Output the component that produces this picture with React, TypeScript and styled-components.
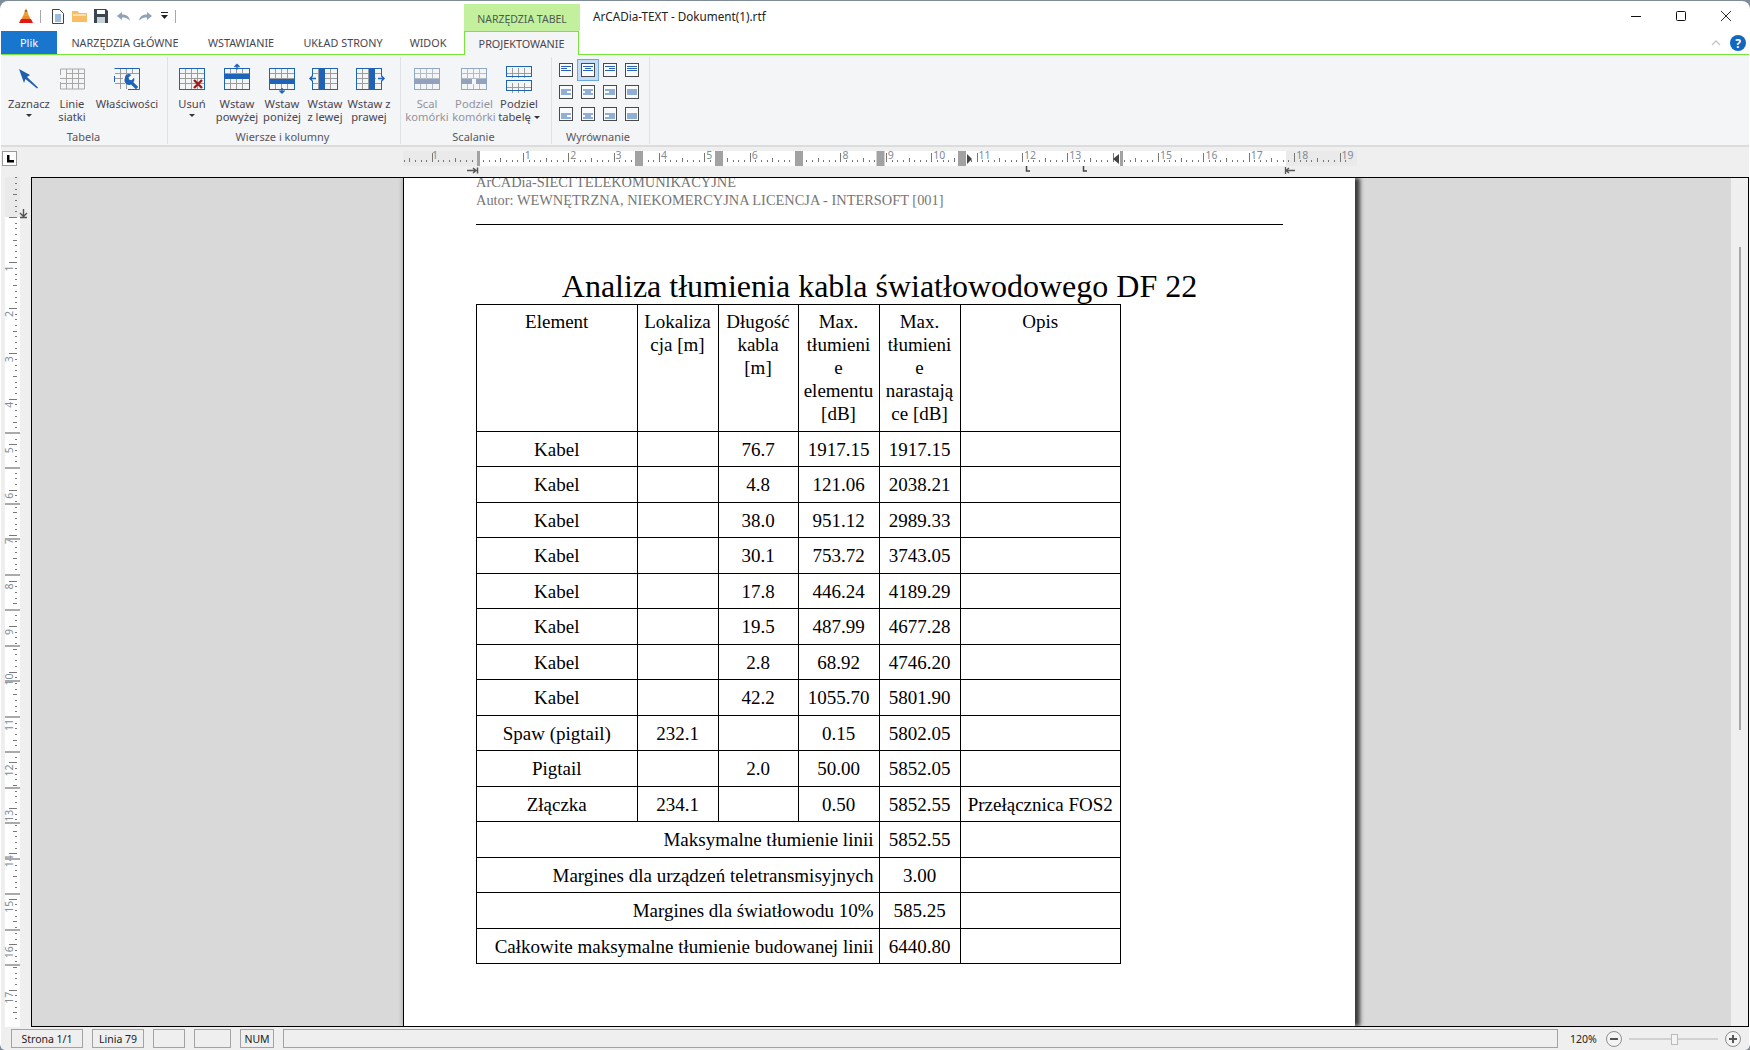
import React from 'react';
import styled, { createGlobalStyle } from 'styled-components';

const GlobalStyle = createGlobalStyle`
  html, body {
    margin: 0;
    padding: 0;
    background: #7d8c98;
    overflow: hidden;
  }
  * {
    box-sizing: border-box;
  }
`;

const uiFont = `"Noto Sans", "Open Sans", sans-serif`;
const docFont = `"Liberation Serif", "Times New Roman", serif`;

const Window = styled.div`
  width: 1750px;
  height: 1049px;
  margin-top: 1px;
  padding: 0 1px;
  display: flex;
  flex-direction: column;
  background: #ffffff;
  border-radius: 8px 8px 6px 6px;
  overflow: hidden;
  font-family: ${uiFont};
  color: #444;
`;

const TitleRow = styled.div`
  height: 30px;
  display: flex;
  align-items: stretch;
  flex: none;
`;

const QuickBar = styled.div`
  width: 463px;
  display: flex;
  align-items: center;
  padding-left: 18px;
`;

const QuickIcon = styled.svg<{ $gap?: number }>`
  flex: none;
  margin-right: ${(p) => p.$gap ?? 7}px;
`;

const QuickSep = styled.div`
  width: 1px;
  height: 13px;
  background: #a8a8a8;
  margin: 0 11px 0 -1px;
`;

const ContextTab = styled.div`
  width: 116px;
  margin-top: 3px;
  background: #c2f09c;
  color: #505a50;
  font-size: 10.5px;
  display: flex;
  align-items: center;
  justify-content: center;
  padding-top: 3px;
`;

const DocTitle = styled.div`
  margin-left: 13px;
  font-size: 11.7px;
  line-height: 30px;
  color: #222;
`;

const WindowControls = styled.div`
  margin-left: auto;
  display: flex;
  align-items: center;
  padding-right: 18px;
  gap: 35px;
`;

const TabsRow = styled.div`
  height: 24px;
  display: flex;
  align-items: stretch;
  flex: none;
  border-bottom: 1px solid #76e63a;
`;

const FileTab = styled.div`
  width: 56px;
  background: #1976cf;
  color: #fff;
  font-size: 11px;
  display: flex;
  align-items: center;
  justify-content: center;
`;

const Tab = styled.div<{ $w: number }>`
  width: ${(p) => p.$w}px;
  font-size: 10.8px;
  color: #4a4550;
  display: flex;
  align-items: center;
  justify-content: center;
`;

const ActiveTab = styled(Tab)`
  margin-left: 5px;
  height: 24px;
  background: #f3f5f7;
  border: 1px solid #76e63a;
  border-bottom: none;
`;

const RibbonEnd = styled.div`
  margin-left: auto;
  display: flex;
  align-items: center;
  padding-right: 3px;
  gap: 9px;
`;

const Ribbon = styled.div`
  height: 92px;
  flex: none;
  display: flex;
  padding: 2px 0 1px;
  background: #f3f5f7;
  border-bottom: 2px solid #dcdcdc;
`;

const Group = styled.div<{ $w: number }>`
  width: ${(p) => p.$w}px;
  display: flex;
  flex-direction: column;
  border-right: 1px solid #dfe2e5;
`;

const GroupBody = styled.div<{ $pad: number }>`
  flex: 1;
  display: flex;
  padding-left: ${(p) => p.$pad}px;
`;

const GroupLabel = styled.div<{ $shift?: number }>`
  height: 15px;
  line-height: 15px;
  padding-right: ${(p) => p.$shift ?? 0}px;
  text-align: center;
  font-size: 11px;
  color: #5a5560;
`;

const RibbonButton = styled.div<{ $w: number; $off?: boolean }>`
  width: ${(p) => p.$w}px;
  padding-top: 11px;
  display: flex;
  flex-direction: column;
  align-items: center;
  text-align: center;
  font-size: 11.2px;
  line-height: 13px;
  white-space: nowrap;
  color: ${(p) => (p.$off ? '#93939b' : '#4a4550')};
`;

const ButtonIcon = styled.svg`
  display: block;
  margin-bottom: 7px;
  overflow: visible;
`;

const DropArrow = styled.span`
  display: block;
  width: 0;
  height: 0;
  margin: 4px auto 0;
  border-left: 3px solid transparent;
  border-right: 3px solid transparent;
  border-top: 3px solid #333;
`;

const InlineArrow = styled(DropArrow)`
  display: inline-block;
  margin: 0 0 2px 3px;
`;

const AlignGrid = styled.div`
  margin-top: 2px;
  display: grid;
  grid-template-columns: repeat(4, 22px);
  grid-auto-rows: 22px;
`;

const AlignCell = styled.div<{ $on?: boolean }>`
  display: flex;
  align-items: center;
  justify-content: center;
  background: ${(p) => (p.$on ? '#c5def7' : 'transparent')};
  border: 1px solid ${(p) => (p.$on ? '#6da6e2' : 'transparent')};
`;

const RulerRow = styled.div`
  height: 30px;
  flex: none;
  display: flex;
  background: #efefef;
  position: relative;
`;

const CornerBox = styled.div`
  width: 15px;
  height: 15px;
  margin: 4px 0 0 1px;
  background: #fff;
  border: 1px solid #999;
  display: flex;
  align-items: center;
  justify-content: center;
`;

const RulerSvg = styled.svg`
  display: block;
  margin-left: 386px;
  font-family: ${uiFont};
`;

const Middle = styled.div`
  flex: 1;
  min-height: 0;
  display: flex;
  background: #efefef;
`;

const SideRuler = styled.svg`
  display: block;
  width: 30px;
  flex: none;
  font-family: ${uiFont};
`;

const Workspace = styled.div`
  flex: 1;
  min-width: 0;
  display: flex;
  border: 1px solid #000;
  overflow: hidden;
`;

const GrayArea = styled.div`
  flex: 1;
  min-width: 0;
  background: #d9d9d9;
  padding-left: 371px;
`;

const Scrollbar = styled.div`
  width: 17px;
  flex: none;
  background: #efefef;
  display: flex;
  justify-content: center;
  padding-top: 69px;
`;

const ScrollThumb = styled.div`
  width: 2px;
  height: 483px;
  background: #a8a8a8;
`;

const Page = styled.div`
  display: flow-root;
  width: 952px;
  height: 100%;
  background: #fff;
  border-left: 1px solid #000;
  padding-left: 72px;
  box-shadow: 5px 0 4px #3c3c3c, -2px 0 3px #bcbcbc;
  font-family: ${docFont};
  color: #000;
`;

const DocHeader = styled.div`
  width: 807px;
  margin-top: -5px;
  padding-bottom: 14px;
  border-bottom: 1px solid #000;
  font-size: 14.4px;
  line-height: 18.4px;
  color: #767676;
`;

const Heading = styled.h1`
  width: 807px;
  margin: 43px 0 0;
  font-size: 32px;
  font-weight: 400;
  line-height: 36px;
  text-align: center;
  white-space: nowrap;
`;

const Table = styled.table`
  width: 644px;
  table-layout: fixed;
  border-collapse: collapse;
  font-size: 19px;
  line-height: 23px;
`;

const Col = styled.col<{ $w: number }>`
  width: ${(p) => p.$w}px;
`;

const Row = styled.tr`
  height: 35.5px;
`;

const HeaderRow = styled.tr`
  height: 127px;
`;

const HeadCell = styled.td`
  border: 1px solid #000;
  padding: 5px 0 0;
  text-align: center;
  vertical-align: top;
`;

const Cell = styled.td`
  border: 1px solid #000;
  padding: 0;
  text-align: center;
  vertical-align: middle;
  white-space: nowrap;
`;

const SumCell = styled(Cell)`
  text-align: right;
  padding-right: 5px;
`;

const StatusBar = styled.div`
  height: 23px;
  flex: none;
  display: flex;
  align-items: flex-start;
  padding: 2px 0 0 10px;
  background: #efefef;
  font-size: 10.5px;
  color: #222;
`;

const StatusBox = styled.div<{ $w: number; $grow?: boolean }>`
  width: ${(p) => p.$w}px;
  height: 19px;
  margin-right: 9px;
  border: 1px solid #a3a3a3;
  display: flex;
  align-items: center;
  justify-content: center;
  flex: ${(p) => (p.$grow ? 1 : 'none')};
`;

const ZoomBox = styled.div`
  width: 182px;
  flex: none;
  height: 19px;
  display: flex;
  align-items: center;
  padding-left: 3px;
`;

const ZoomText = styled.span`
  width: 34px;
  margin-right: 1px;
`;

// horizontal ruler
const cm = 45.37;
const zeroX = 74.5;

const hTicks = () => {
  const out: React.ReactNode[] = [];
  for (let i = -16; i <= 19 * 8 + 1; i++) {
    const x = Math.round(zeroX + (i * cm) / 8) + 0.5;
    if (x > 952 || x < 1) continue;
    const major = i % 8 === 0;
    const mid = i % 4 === 0;
    out.push(
      <line
        key={i}
        x1={x}
        x2={x}
        y1={major ? 6 : mid ? 11 : 13}
        y2={15}
        stroke="#777"
      />,
    );
  }
  return out;
};

const hNumbers = [1, 2, 3, 4, 5, 6, 7, 8, 9, 10, 11, 12, 13, 15, 16, 17, 18, 19];
const hBlocks = [232, 312, 392, 473.5, 555];

const TopRuler = () => (
  <RulerSvg width="960" height="30" viewBox="0 0 960 30">
    <rect x="0" y="4" width="75" height="15" fill="#eaeaea" />
    <rect x="75" y="4" width="808" height="15" fill="#ffffff" />
    <rect x="883" y="4" width="71" height="15" fill="#eaeaea" />
    {hTicks()}
    <text x="29" y="12" fontSize="10.5" fill="#7f8c99">1</text>
    {hNumbers.map((n) => (
      <text
        key={n}
        x={zeroX + n * cm + 2}
        y="12"
        fontSize="10.5"
        fill="#7f8c99"
      >
        {n}
      </text>
    ))}
    <rect x="74" y="4" width="3" height="15" fill="#a2a2a2" />
    {hBlocks.map((x) => (
      <rect key={x} x={x} y="4" width="8" height="15" fill="#a2a2a2" />
    ))}
    <polygon points="564,7 564,17 569,12" fill="#444" />
    <rect x="717" y="4" width="3" height="15" fill="#a2a2a2" />
    <polygon points="716,7 716,17 710,12" fill="#444" />
    <path d="M64 23.5h9M70 21l3 2.5-3 2.500M74.500 20.500v6" stroke="#555" strokeWidth="1.500" fill="none" />
    <path d="M623.500 19v5h3.500M680.500 19v5h3.500" stroke="#444" strokeWidth="1.500" fill="none" />
    <path d="M882.500 20v7M892 23.500h-9M886 21l-3 2.500 3 2.500" stroke="#555" strokeWidth="1.300" fill="none" />
  </RulerSvg>
);

// vertical ruler
const vZero = 40;
const vCm = 45.45;

const vTicks = () => {
  const out: React.ReactNode[] = [];
  for (let i = -7; i <= 17 * 8 + 5; i++) {
    const y = Math.round(vZero + (i * vCm) / 8) + 0.5;
    const major = i % 8 === 0;
    const mid = i % 4 === 0;
    out.push(
      <line
        key={i}
        x1={major ? 8 : mid ? 12 : 14}
        x2={16}
        y1={y}
        y2={y}
        stroke="#777"
      />,
    );
  }
  return out;
};

const LeftRuler = () => (
  <SideRuler height="850" viewBox="0 0 30 850">
    <rect x="4" y="0" width="15" height="40" fill="#eaeaea" />
    <rect x="4" y="40" width="15" height="810" fill="#ffffff" />
    {vTicks()}
    {Array.from({ length: 17 }, (_, k) => k + 1).map((n) => (
      <text
        key={n}
        transform={`translate(12 ${vZero + n * vCm + (n > 9 ? 14 : 9)}) rotate(-90)`}
        fontSize="10.5"
        fill="#7f8c99"
      >
        {n}
      </text>
    ))}
    {Array.from({ length: 16 }, (_, k) => k).map((k) => (
      <rect
        key={k}
        x="4"
        y={Math.round(254.5 + k * 35.5)}
        width="15"
        height="2"
        fill="#aaaaaa"
      />
    ))}
    <path d="M22.500 32v8M19 36l3.500 3.500L26 36M19 40.500h7" stroke="#555" strokeWidth="1.400" fill="none" />
  </SideRuler>
);

// ribbon icons
const GridLines = ({ c = '#1f63b8', inner = '#9c9c9c' }: { c?: string; inner?: string }) => (
  <>
    <path
      d="M6.500 1v20M12.500 1v20M18.500 1v20M1 5.500h24M1 10.500h24M1 15.500h24"
      stroke={inner}
      fill="none"
    />
    <rect x="0.500" y="0.500" width="25" height="21" fill="none" stroke={c} />
  </>
);

const Ico = ({ children }: { children: React.ReactNode }) => (
  <ButtonIcon width="26" height="22" viewBox="0 0 26 22">
    {children}
  </ButtonIcon>
);

const icons: Record<string, React.ReactNode> = {
  cursor: (
    <path d="M3 1L14 7l-3 2 11 10.500-1 1L9.500 11 8 15z" fill="#1f5fae" />
  ),
  lines: (
    <>
      <path d="M7.500 1v20M13.500 1v20M19.500 1v20M7 5.500h18M1 10.500h24M1 15.500h24" stroke="#a8a8a8" fill="none" />
      <path d="M1.500 1h24v20h-24M1.500 1v6M1.500 14v7" stroke="#a8a8a8" fill="none" />
    </>
  ),
  props: (
    <>
      <path d="M6.500 1v20M12.500 1v7M18.500 1v5M1 5.500h24M1 10.500h8M1 15.500h10M6.500 15v6M12.500 15v6" stroke="#9c9c9c" fill="none" />
      <path d="M1 .500h24.500v21H14M.500 .500h2M.500 8v6" stroke="#1f63b8" fill="none" />
      <path d="M11.500 7.500a4.500 4.500 0 0 1 5.800-.6L14.500 9.500l.8 2.200 2.200.6 2.600-2.600a4.500 4.500 0 0 1-.7 4.600l4.800 4.700-2.300 2.300-4.900-4.800a4.500 4.500 0 0 1-5.700-1.500 4.500 4.500 0 0 1-.8-3.500z" fill="#1f63b8" />
    </>
  ),
  remove: (
    <>
      <GridLines />
      <path d="M15 12l8 8M23 12l-8 8" stroke="#9c1c1c" strokeWidth="2.400" />
    </>
  ),
  above: (
    <>
      <GridLines />
      <rect x="0" y="6" width="26" height="5" fill="#1f63b8" />
      <path d="M13 -3.500v5M10.500 -1l2.500-2.500 2.500 2.500" stroke="#1f63b8" strokeWidth="1.500" fill="none" />
    </>
  ),
  below: (
    <>
      <GridLines />
      <rect x="0" y="11" width="26" height="5" fill="#1f63b8" />
      <path d="M13 20v5M10.500 22.500l2.500 2.500 2.500-2.500" stroke="#1f63b8" strokeWidth="1.500" fill="none" />
    </>
  ),
  left: (
    <>
      <GridLines />
      <rect x="7" y="0" width="6" height="22" fill="#1f63b8" />
      <rect x="-2" y="8" width="8" height="5" fill="#f3f5f7" />
      <path d="M-2 10.500h6M.500 8l-2.500 2.500L.500 13" stroke="#1f63b8" strokeWidth="1.500" fill="none" />
    </>
  ),
  right: (
    <>
      <GridLines />
      <rect x="13" y="0" width="6" height="22" fill="#1f63b8" />
      <rect x="20" y="8" width="8" height="5" fill="#f3f5f7" />
      <path d="M22 10.500h6M25.500 8l2.500 2.500-2.500 2.500" stroke="#1f63b8" strokeWidth="1.500" fill="none" />
    </>
  ),
  merge: (
    <>
      <GridLines c="#92a6c6" inner="#b4bcc8" />
      <rect x="0" y="11" width="26" height="5" fill="#93a1bd" />
    </>
  ),
  split: (
    <>
      <GridLines c="#92a6c6" inner="#b4bcc8" />
      <rect x="0" y="11" width="26" height="5" fill="#93a1bd" />
      <rect x="11" y="11" width="4" height="5" fill="#f3f5f7" />
    </>
  ),
  table: (
    <>
      <path d="M6.500 0v10M12.500 0v10M18.500 0v10M1 5.500h24M6.500 15v10M12.500 15v10M18.500 15v10M1 19.500h24" stroke="#9c9c9c" fill="none" />
      <rect x="0.500" y="-1.500" width="25" height="10" fill="none" stroke="#1f63b8" />
      <rect x="0.500" y="12.500" width="25" height="10" fill="none" stroke="#1f63b8" />
    </>
  ),
};

const AlignIcon = ({ h, v }: { h: number; v: number }) => {
  const top = v === 0 ? 3 : v === 1 ? 4.5 : 6.5;
  const lines = [0, 1, 2].map((i) => {
    const long = i % 2 === 0;
    const w = h === 3 ? 10 : long ? 10 : 6;
    const x = h === 0 || h === 3 ? 2 : h === 1 ? 7 - w / 2 : 12 - w;
    return <path key={i} d={`M${x} ${top + i * 2 + 0.5}h${w}`} stroke="#2a62b4" fill="none" />;
  });
  return (
    <svg width="14" height="14" viewBox="0 0 14 14">
      <rect x="0.500" y="0.500" width="13" height="13" fill="#f9fafb" stroke="#4a4a4a" />
      {lines}
    </svg>
  );
};

const rows = [
  ['76.7', '1917.15', '1917.15'],
  ['4.8', '121.06', '2038.21'],
  ['38.0', '951.12', '2989.33'],
  ['30.1', '753.72', '3743.05'],
  ['17.8', '446.24', '4189.29'],
  ['19.5', '487.99', '4677.28'],
  ['2.8', '68.92', '4746.20'],
  ['42.2', '1055.70', '5801.90'],
];

const summary = [
  ['Maksymalne tłumienie linii', '5852.55'],
  ['Margines dla urządzeń teletransmisyjnych', '3.00'],
  ['Margines dla światłowodu 10%', '585.25'],
  ['Całkowite maksymalne tłumienie budowanej linii', '6440.80'],
];

const App: React.FC = () => {
  return (
    <Window>
      <GlobalStyle />
      <TitleRow>
        <QuickBar>
          <QuickIcon width="14" height="16" viewBox="0 0 14 16" $gap={8}>
            <polygon points="7,0 10,8 4,8" fill="#f0a030" />
            <polygon points="4,8 10,8 12,12 2,12" fill="#ef8a2a" />
            <polygon points="2,11 12,11 14,15 0,15" fill="#e01a10" />
            <path d="M5.800 3h2.400" stroke="#333" />
          </QuickIcon>
          <QuickSep />
          <QuickIcon width="12" height="15" viewBox="0 0 12 15" $gap={8}>
            <path d="M.5 .5h7l4 4v10H.5z" fill="#fff" stroke="#444" />
            <path d="M3 6h6M3 8h6M3 10h6M3 12h6" stroke="#3a78c0" />
          </QuickIcon>
          <QuickIcon width="15" height="12" viewBox="0 0 15 12" $gap={7}>
            <path d="M0 1h6l1 2h8v9H0z" fill="#f8bd62" />
            <path d="M1 5h13" stroke="#fff" />
          </QuickIcon>
          <QuickIcon width="14" height="14" viewBox="0 0 14 14" $gap={9}>
            <path d="M0 0h12l2 2v12H0z" fill="#3c4650" />
            <rect x="3" y="1" width="8" height="4" fill="#fff" />
            <rect x="3" y="8" width="8" height="6" fill="#c8d0d8" />
          </QuickIcon>
          <QuickIcon width="13" height="9" viewBox="0 0 13 9" $gap={9}>
            <path d="M5 0L0 4l5 4V5.500c3 0 5 .5 8 3C12 4 9 2.500 5 2.500z" fill="#8fa3b8" />
          </QuickIcon>
          <QuickIcon width="13" height="9" viewBox="0 0 13 9" $gap={8}>
            <path d="M8 0l5 4-5 4V5.500c-3 0-5 .5-8 3C1 4 4 2.500 8 2.500z" fill="#8fa3b8" />
          </QuickIcon>
          <QuickIcon width="9" height="8" viewBox="0 0 9 8" $gap={7}>
            <path d="M1 .5h7" stroke="#222" />
            <polygon points="1,3 8,3 4.500,7" fill="#222" />
          </QuickIcon>
          <QuickSep />
        </QuickBar>
        <ContextTab>NARZĘDZIA TABEL</ContextTab>
        <DocTitle>ArCADia-TEXT - Dokument(1).rtf</DocTitle>
        <WindowControls>
          <svg width="10" height="10" viewBox="0 0 10 10">
            <path d="M0 5.500h10" stroke="#111" />
          </svg>
          <svg width="10" height="10" viewBox="0 0 10 10">
            <rect x=".5" y=".5" width="9" height="9" rx="1" fill="none" stroke="#111" />
          </svg>
          <svg width="10" height="10" viewBox="0 0 10 10">
            <path d="M0 0l10 10M10 0L0 10" stroke="#111" strokeWidth="0.900" />
          </svg>
        </WindowControls>
      </TitleRow>

      <TabsRow>
        <FileTab>Plik</FileTab>
        <Tab $w={136}>NARZĘDZIA GŁÓWNE</Tab>
        <Tab $w={96}>WSTAWIANIE</Tab>
        <Tab $w={108}>UKŁAD STRONY</Tab>
        <Tab $w={62}>WIDOK</Tab>
        <ActiveTab $w={115}>PROJEKTOWANIE</ActiveTab>
        <RibbonEnd>
          <svg width="10" height="6" viewBox="0 0 10 6">
            <path d="M1 5l4-4 4 4" stroke="#c4c4c4" strokeWidth="1.300" fill="none" />
          </svg>
          <svg width="16" height="16" viewBox="0 0 16 16" style={{ fontFamily: uiFont }}>
            <circle cx="8" cy="8" r="8" fill="#1068c0" />
            <text x="8" y="12.500" textAnchor="middle" fontSize="12" fontWeight="700" fill="#fff">?</text>
          </svg>
        </RibbonEnd>
      </TabsRow>

      <Ribbon>
        <Group $w={167}>
          <GroupBody $pad={3}>
            <RibbonButton $w={50}>
              <Ico>{icons.cursor}</Ico>
              Zaznacz
              <DropArrow />
            </RibbonButton>
            <RibbonButton $w={36}>
              <Ico>{icons.lines}</Ico>
              Linie
              <br />
              siatki
            </RibbonButton>
            <RibbonButton $w={74}>
              <Ico>{icons.props}</Ico>
              Właściwości
            </RibbonButton>
          </GroupBody>
          <GroupLabel $shift={1}>Tabela</GroupLabel>
        </Group>
        <Group $w={233}>
          <GroupBody $pad={2}>
            <RibbonButton $w={44}>
              <Ico>{icons.remove}</Ico>
              Usuń
              <DropArrow />
            </RibbonButton>
            <RibbonButton $w={46}>
              <Ico>{icons.above}</Ico>
              Wstaw
              <br />
              powyżej
            </RibbonButton>
            <RibbonButton $w={44}>
              <Ico>{icons.below}</Ico>
              Wstaw
              <br />
              poniżej
            </RibbonButton>
            <RibbonButton $w={42}>
              <Ico>{icons.left}</Ico>
              Wstaw
              <br />z lewej
            </RibbonButton>
            <RibbonButton $w={46}>
              <Ico>{icons.right}</Ico>
              Wstaw z
              <br />
              prawej
            </RibbonButton>
          </GroupBody>
          <GroupLabel $shift={3}>Wiersze i kolumny</GroupLabel>
        </Group>
        <Group $w={151}>
          <GroupBody $pad={3}>
            <RibbonButton $w={46} $off>
              <Ico>{icons.merge}</Ico>
              Scal
              <br />
              komórki
            </RibbonButton>
            <RibbonButton $w={48} $off>
              <Ico>{icons.split}</Ico>
              Podziel
              <br />
              komórki
            </RibbonButton>
            <RibbonButton $w={42}>
              <Ico>{icons.table}</Ico>
              Podziel
              <span>
                tabelę
                <InlineArrow />
              </span>
            </RibbonButton>
          </GroupBody>
          <GroupLabel $shift={5}>Scalanie</GroupLabel>
        </Group>
        <Group $w={98}>
          <GroupBody $pad={3}>
            <AlignGrid>
              {[0, 1, 2].map((v) =>
                [0, 1, 2, 3].map((h) => (
                  <AlignCell key={`${v}-${h}`} $on={v === 0 && h === 1}>
                    <AlignIcon h={h} v={v} />
                  </AlignCell>
                )),
              )}
            </AlignGrid>
          </GroupBody>
          <GroupLabel $shift={5}>Wyrównanie</GroupLabel>
        </Group>
      </Ribbon>

      <RulerRow>
        <CornerBox>
          <svg width="8" height="8" viewBox="0 0 8 8">
            <path d="M1 0h2.500v5H8v2.500H1z" fill="#000" />
          </svg>
        </CornerBox>
        <TopRuler />
      </RulerRow>

      <Middle>
        <LeftRuler />
        <Workspace>
          <GrayArea>
            <Page>
              <DocHeader>
                ArCADia-SIECI TELEKOMUNIKACYJNE
                <br />
                Autor: WEWNĘTRZNA, NIEKOMERCYJNA LICENCJA - INTERSOFT [001]
              </DocHeader>
              <Heading>Analiza tłumienia kabla światłowodowego DF 22</Heading>
              <Table>
                <colgroup>
                  <Col $w={160.5} />
                  <Col $w={81} />
                  <Col $w={80} />
                  <Col $w={81} />
                  <Col $w={81} />
                  <Col $w={160.5} />
                </colgroup>
                <tbody>
                  <HeaderRow>
                    <HeadCell>Element</HeadCell>
                    <HeadCell>
                      Lokaliza
                      <br />
                      cja [m]
                    </HeadCell>
                    <HeadCell>
                      Długość
                      <br />
                      kabla
                      <br />
                      [m]
                    </HeadCell>
                    <HeadCell>
                      Max.
                      <br />
                      tłumieni
                      <br />e<br />
                      elementu
                      <br />
                      [dB]
                    </HeadCell>
                    <HeadCell>
                      Max.
                      <br />
                      tłumieni
                      <br />e<br />
                      narastają
                      <br />
                      ce [dB]
                    </HeadCell>
                    <HeadCell>Opis</HeadCell>
                  </HeaderRow>
                  {rows.map((r) => (
                    <Row key={r[2]}>
                      <Cell>Kabel</Cell>
                      <Cell />
                      <Cell>{r[0]}</Cell>
                      <Cell>{r[1]}</Cell>
                      <Cell>{r[2]}</Cell>
                      <Cell />
                    </Row>
                  ))}
                  <Row>
                    <Cell>Spaw (pigtail)</Cell>
                    <Cell>232.1</Cell>
                    <Cell />
                    <Cell>0.15</Cell>
                    <Cell>5802.05</Cell>
                    <Cell />
                  </Row>
                  <Row>
                    <Cell>Pigtail</Cell>
                    <Cell />
                    <Cell>2.0</Cell>
                    <Cell>50.00</Cell>
                    <Cell>5852.05</Cell>
                    <Cell />
                  </Row>
                  <Row>
                    <Cell>Złączka</Cell>
                    <Cell>234.1</Cell>
                    <Cell />
                    <Cell>0.50</Cell>
                    <Cell>5852.55</Cell>
                    <Cell>Przełącznica FOS2</Cell>
                  </Row>
                  {summary.map((s) => (
                    <Row key={s[0]}>
                      <SumCell colSpan={4}>{s[0]}</SumCell>
                      <Cell>{s[1]}</Cell>
                      <Cell />
                    </Row>
                  ))}
                </tbody>
              </Table>
            </Page>
          </GrayArea>
          <Scrollbar>
            <ScrollThumb />
          </Scrollbar>
        </Workspace>
      </Middle>

      <StatusBar>
        <StatusBox $w={72}>Strona 1/1</StatusBox>
        <StatusBox $w={52}>Linia 79</StatusBox>
        <StatusBox $w={32} />
        <StatusBox $w={37} />
        <StatusBox $w={34}>NUM</StatusBox>
        <StatusBox $w={0} $grow />
        <ZoomBox>
          <ZoomText>120%</ZoomText>
          <svg width="136" height="18" viewBox="0 0 136 18">
            <circle cx="9" cy="9" r="7.500" fill="#f4f4f4" stroke="#8e8e8e" />
            <path d="M5 9h8" stroke="#555" strokeWidth="2" />
            <path d="M24 9h89" stroke="#b4b4b4" />
            <rect x="66.500" y="4.500" width="6" height="10" fill="#f4f4f4" stroke="#bbb" />
            <circle cx="128" cy="9" r="7.500" fill="#f4f4f4" stroke="#8e8e8e" />
            <path d="M124 9h8M128 5v8" stroke="#555" strokeWidth="2" />
          </svg>
        </ZoomBox>
      </StatusBar>
    </Window>
  );
};

export default App;
